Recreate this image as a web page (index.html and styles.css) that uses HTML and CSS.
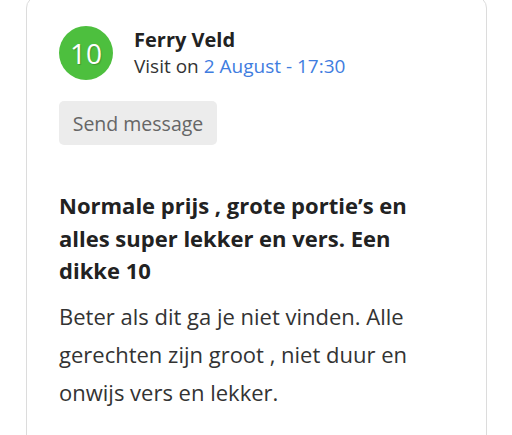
FILE: index.html
```html
<!DOCTYPE html>
<html lang="en">
<head>
<meta charset="UTF-8">
<title>Review</title>
<link rel="stylesheet" href="styles.css">
</head>
<body>
<div class="card">
  <div class="reviewer">
    <div class="score">10</div>
    <div class="who">
      <div class="name">Ferry Veld</div>
      <div class="visit">Visit on <a href="#" class="date">2 August - 17:30</a></div>
    </div>
  </div>
  <button type="button" class="send">Send message</button>
  <h2 class="title">Normale prijs , grote portie’s en alles super lekker en vers. Een dikke 10</h2>
  <p class="text">Beter als dit ga je niet vinden. Alle gerechten zijn groot , niet duur en onwijs vers en lekker.</p>
</div>
</body>
</html>
```

FILE: styles.css
```css
body {
  margin: 0;
  background: #fff;
  font-family: "Open Sans", "Noto Sans", sans-serif;
  color: #222;
  overflow: hidden;
}

.card {
  margin: -4px 25px 0 26px;
  height: 460px;
  border: 1px solid #dcdcdc;
  border-radius: 12px;
  padding: 29px 32px 0 32px;
  box-sizing: border-box;
}

.reviewer {
  display: flex;
  align-items: center;
  gap: 21px;
}

.score {
  width: 54px;
  height: 54px;
  border-radius: 50%;
  background: #4dbf3e;
  color: #fff;
  font-size: 28px;
  line-height: 54px;
  text-align: center;
  text-shadow: 1px 1px 1px rgba(0,0,0,0.2);
  flex: none;
}

.who {
  line-height: 27px;
}

.name {
  font-size: 20px;
  font-weight: bold;
  color: #222;
}

.visit {
  font-size: 19px;
  color: #333;
}

.date {
  color: #3f7ddf;
  text-decoration: none;
}

.send {
  display: block;
  margin-top: 21px;
  width: 158px;
  height: 44px;
  border: none;
  border-radius: 5px;
  background: #ececec;
  color: #666;
  font-family: inherit;
  font-size: 19.5px;
  padding: 0;
}

.title {
  margin: 44px 0 0 0;
  font-size: 22px;
  line-height: 32.5px;
  font-weight: bold;
  color: #222;
  width: 370px;
}

.text {
  margin: 10px 0 0 0;
  font-size: 22px;
  line-height: 38px;
  color: #333;
  width: 370px;
}
```
